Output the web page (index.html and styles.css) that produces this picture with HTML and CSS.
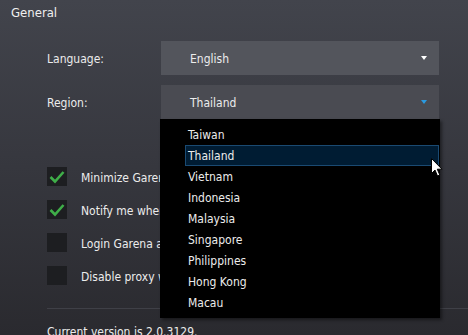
FILE: index.html
```html
<!DOCTYPE html>
<html>
<head>
<meta charset="utf-8">
<link rel="stylesheet" href="styles.css">
</head>
<body>
<div class="page">
  <div class="title">General</div>
  <div class="form">
    <div class="row">
      <div class="label">Language:</div>
      <div class="select lang">
        <span class="value">English</span>
        <span class="arrow white"></span>
      </div>
    </div>
    <div class="row">
      <div class="label">Region:</div>
      <div class="select region">
        <span class="value">Thailand</span>
        <span class="arrow blue"></span>
        <ul class="menu">
          <li>Taiwan</li>
          <li class="sel">Thailand</li>
          <li>Vietnam</li>
          <li>Indonesia</li>
          <li>Malaysia</li>
          <li>Singapore</li>
          <li>Philippines</li>
          <li>Hong Kong</li>
          <li>Macau</li>
        </ul>
        <svg class="cursor" width="13" height="20" viewBox="0 0 13 20"><path d="M0.5 0.5 L0.5 15.5 L4 12 L6.5 18 L8.8 17 L6.3 11.2 L11 11.2 Z" fill="#fff" stroke="#000" stroke-width="1"/></svg>
      </div>
    </div>
  </div>
  <div class="checks">
    <div class="check"><span class="box on"><svg width="20" height="19" viewBox="0 0 20 19"><path d="M3.5 10 L8 14.5 L16.5 5" fill="none" stroke="#3fae49" stroke-width="2.6"/></svg></span><span class="ctext">Minimize Garena to system tray when closed</span></div>
    <div class="check"><span class="box on"><svg width="20" height="19" viewBox="0 0 20 19"><path d="M3.5 10 L8 14.5 L16.5 5" fill="none" stroke="#3fae49" stroke-width="2.6"/></svg></span><span class="ctext">Notify me when my friends come online</span></div>
    <div class="check"><span class="box"></span><span class="ctext">Login Garena automatically on startup</span></div>
    <div class="check"><span class="box"></span><span class="ctext">Disable proxy when connecting</span></div>
  </div>
  <div class="sep"></div>
  <div class="version">Current version is 2.0.3129.</div>
</div>
</body>
</html>
```
FILE: styles.css
```css
html, body {
  margin: 0;
  padding: 0;
  width: 468px;
  height: 335px;
  overflow: hidden;
}
body {
  background: linear-gradient(to bottom, #42444c 0%, #36373e 50%, #2a2a2f 100%);
  font-family: "DejaVu Sans Condensed", "DejaVu Sans", sans-serif;
  font-stretch: semi-condensed;
  font-size: 12px;
  color: #ececec;
}
.page {
  padding: 4px 0 0 0;
}
.title {
  padding-left: 11px;
  font-size: 13px;
  line-height: 17px;
  color: #f0f0f0;
}
.form {
  padding-left: 47px;
  margin-top: 20px;
  display: flex;
  flex-direction: column;
  gap: 10px;
}
.row {
  display: flex;
  align-items: center;
}
.label {
  width: 114px;
  padding-top: 2px;
}
.select {
  position: relative;
  width: 278px;
  height: 34px;
  display: flex;
  align-items: center;
  padding-left: 29px;
  box-sizing: border-box;
}
.lang { background: #53555c; }
.region { background: #4a4b52; }
.value { flex: 1; padding-top: 2px; }
.arrow {
  width: 0;
  height: 0;
  border-left: 3.5px solid transparent;
  border-right: 3.5px solid transparent;
  border-top: 4px solid #fff;
  margin-right: 12px;
}
.arrow.blue { border-top-color: #2a9ae0; }
.menu {
  position: absolute;
  left: -1px;
  top: 34px;
  width: 280px;
  margin: 0;
  padding: 5px 0 5px;
  list-style: none;
  background: #000;
  box-shadow: 2px 2px 3px rgba(0,0,0,0.45);
  z-index: 5;
}
.menu li {
  height: 21px;
  line-height: 19px;
  padding: 2px 0 0 3px;
  margin: 0 1px 0 25px;
  box-sizing: border-box;
}
.menu li.sel {
  background: #001c33;
  outline: 1px solid #1a4a72;
  outline-offset: -1px;
}
.cursor {
  position: absolute;
  left: 270px;
  top: 73px;
  z-index: 6;
}
.checks {
  padding-left: 47px;
  margin-top: 48px;
  display: flex;
  flex-direction: column;
  gap: 14px;
}
.check {
  display: flex;
  align-items: center;
  height: 19px;
}
.box {
  width: 20px;
  height: 19px;
  background: #1d1e21;
  margin-right: 14px;
  display: flex;
}
.ctext {
  white-space: nowrap;
  padding-top: 2px;
}
.sep {
  margin: 23px 0 0 47px;
  height: 1px;
  background: #3f4047;
}
.version {
  padding-left: 47px;
  margin-top: 16px;
}
```
